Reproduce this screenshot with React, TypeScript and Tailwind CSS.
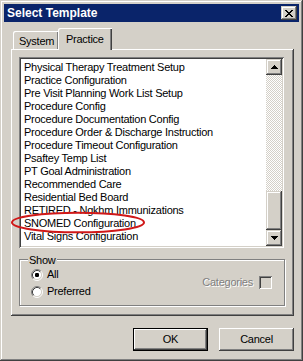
import React from "react";

const ITEMS = [
  "Physical Therapy Treatment Setup",
  "Practice Configuration",
  "Pre Visit Planning Work List Setup",
  "Procedure Config",
  "Procedure Documentation Config",
  "Procedure Order & Discharge Instruction",
  "Procedure Timeout Configuration",
  "Psaftey Temp List",
  "PT Goal Administration",
  "Recommended Care",
  "Residential Bed Board",
  "RETIRED - Ngkhm Immunizations",
  "SNOMED Configuration",
  "Vital Signs Configuration",
];

const RAISED =
  "shadow-[inset_-1px_-1px_#404040,inset_1px_1px_#fff,inset_-2px_-2px_#808080,inset_2px_2px_#d4d0c8]";
const RAISED_SOFT =
  "shadow-[inset_-1px_-1px_#404040,inset_1px_1px_#d4d0c8,inset_-2px_-2px_#808080,inset_2px_2px_#fff]";
const SUNKEN =
  "shadow-[inset_1px_1px_#808080,inset_-1px_-1px_#fff,inset_2px_2px_#404040,inset_-2px_-2px_#d4d0c8]";

const Arrow: React.FC<{ dir: "up" | "down" }> = ({ dir }) => (
  <svg width="7" height="4" viewBox="0 0 7 4" shapeRendering="crispEdges">
    {dir === "up" ? (
      <path d="M3 0h1v1h1v1h1v1h1v1H0V3h1V2h1V1h1z" fill="#000" />
    ) : (
      <path d="M0 0h7v1H6v1H5v1H4v1H3V3H2V2H1V1H0z" fill="#000" />
    )}
  </svg>
);

const Radio: React.FC<{ checked?: boolean }> = ({ checked }) => (
  <svg width="12" height="12" viewBox="0 0 12 12">
    <circle cx="6" cy="6" r="4.5" fill="#fff" />
    <path d="M2.11 9.89A5.5 5.5 0 0 1 9.89 2.11" stroke="#808080" fill="none" />
    <path d="M9.89 2.11A5.5 5.5 0 0 1 2.11 9.89" stroke="#fff" fill="none" />
    <path d="M2.82 9.18A4.5 4.5 0 0 1 9.18 2.82" stroke="#404040" fill="none" />
    <path d="M9.18 2.82A4.5 4.5 0 0 1 2.82 9.18" stroke="#d4d0c8" fill="none" />
    {checked && <rect x="4" y="4" width="4" height="4" rx="1.2" fill="#000" />}
  </svg>
);

const Button: React.FC<{ label: string; isDefault?: boolean }> = ({
  label,
  isDefault,
}) => (
  <div
    className={`w-[75px] h-[23px] ${
      isDefault ? "border border-black" : ""
    } bg-[#d4d0c8]`}
  >
    <div className={`w-full h-full flex items-center justify-center ${RAISED}`}>
      {label}
    </div>
  </div>
);

export default function App() {
  return (
    <div
      className={`relative w-[303px] h-[361px] bg-[#d4d0c8] p-[4px] flex flex-col text-[11px] tracking-[-0.25px] text-black font-['Liberation_Sans',Arial,sans-serif] ${RAISED_SOFT}`}
    >
      {/* title bar */}
      <div className="h-[18px] bg-[#0a246a] flex items-center justify-between pl-[3px] pr-[2px]">
        <span className="text-white font-bold text-[12px] tracking-normal pb-[1px]">
          Select Template
        </span>
        <div
          className={`w-[16px] h-[14px] bg-[#d4d0c8] flex items-center justify-center ${RAISED_SOFT}`}
        >
          <svg width="8" height="7" viewBox="0 0 8 7" shapeRendering="crispEdges">
            <path
              d="M0 0h2v1h1v1h2V1h1V0h2v1H7v1H6v1H5v1h1v1h1v1h1v1H6V6H5V5H3v1H2v1H0V6h1V5h1V4h1V3H2V2H1V1H0z"
              fill="#000"
            />
          </svg>
        </div>
      </div>

      <div className="flex-1 flex flex-col pl-[7px] pr-[5px]">
        {/* tabs */}
        <div className="mt-[6px] h-[21px] flex items-end pl-[2px]">
          <div className="w-[46px] h-[18px] pl-[6px] pt-[2px] flex items-center shadow-[inset_1px_1px_#fff,inset_-1px_0_#404040,inset_-2px_0_#808080] rounded-tl-[2px]">
            System
          </div>
          <div className="relative z-10 ml-[-1px] mb-[-1px] w-[54px] h-[22px] bg-[#d4d0c8] pl-[8px] flex items-center shadow-[inset_1px_1px_#fff,inset_-1px_0_#404040,inset_-2px_0_#808080] rounded-tl-[2px]">
            Practice
          </div>
        </div>

        {/* tab page */}
        <div className={`h-[267px] pt-[8px] pl-[8px] pr-[10px] flex flex-col ${RAISED}`}>
          <div className={`w-[265px] h-[191px] bg-white p-[2px] flex ${SUNKEN}`}>
            <div className="flex-1 pl-[3px] pt-[2px] overflow-hidden">
              {ITEMS.map((item) => (
                <div key={item} className="h-[13px] leading-[13px] whitespace-nowrap">
                  {item}
                </div>
              ))}
            </div>
            <div className="w-[16px] flex flex-col">
              <div
                className={`h-[16px] bg-[#d4d0c8] flex items-center justify-center ${RAISED_SOFT}`}
              >
                <Arrow dir="up" />
              </div>
              <div className="flex-1 flex flex-col [background:repeating-conic-gradient(#d4d0c8_0_25%,#fff_0_50%)_0_0/2px_2px]">
                <div className={`mt-auto h-[39px] bg-[#d4d0c8] ${RAISED_SOFT}`} />
              </div>
              <div
                className={`h-[16px] bg-[#d4d0c8] flex items-center justify-center ${RAISED_SOFT}`}
              >
                <Arrow dir="down" />
              </div>
            </div>
          </div>

          {/* show group */}
          <div className="relative mt-[11px] w-[266px] h-[47px] border border-[#808080] shadow-[inset_1px_1px_#fff,1px_1px_#fff] flex items-center justify-between pl-[11px] pr-[12px]">
            <span className="absolute left-[8px] top-[-8px] px-[1px] bg-[#d4d0c8]">
              Show
            </span>
            <div className="flex flex-col pt-[1px]">
              <div className="h-[17px] flex items-center gap-[4px]">
                <Radio checked />
                <span>All</span>
              </div>
              <div className="h-[17px] flex items-center gap-[4px]">
                <Radio />
                <span>Preferred</span>
              </div>
            </div>
            <div className="flex items-center gap-[6px]">
              <span className="text-[#808080] [text-shadow:1px_1px_0_#fff]">
                Categories
              </span>
              <div className={`w-[13px] h-[13px] bg-[#d4d0c8] ${SUNKEN}`} />
            </div>
          </div>
        </div>

        {/* buttons */}
        <div className="mt-[12px] flex justify-end gap-[11px]">
          <Button label="OK" isDefault />
          <Button label="Cancel" />
        </div>
      </div>

      {/* red annotation */}
      <svg
        className="absolute left-[10px] top-[211px] pointer-events-none"
        width="137"
        height="23"
        viewBox="0 0 137 23"
      >
        <ellipse cx="68" cy="11.5" rx="66" ry="9.8" fill="none" stroke="#d01818" strokeWidth="2" />
      </svg>
    </div>
  );
}
